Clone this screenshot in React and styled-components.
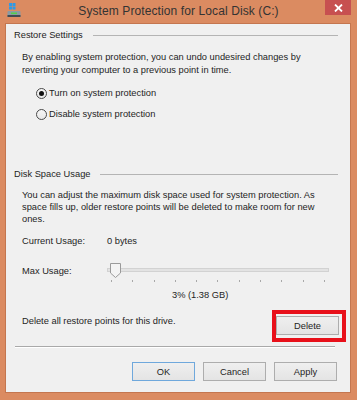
import React from 'react';
import styled, { createGlobalStyle } from 'styled-components';

const GlobalStyle = createGlobalStyle`
  html, body {
    margin: 0;
    padding: 0;
  }
  body {
    font-family: "Liberation Sans", Arial, sans-serif;
    font-size: 9.3px;
    color: #1e1e1e;
  }
`;

const Window = styled.div`
  width: 357px;
  height: 400px;
  background: #db8b61;
  display: flex;
  flex-direction: column;
  box-sizing: border-box;
`;

const TitleBar = styled.div`
  height: 23px;
  display: grid;
  grid-template-columns: 1fr auto 1fr;
  align-items: start;
`;

const AppIcon = styled.svg`
  margin: 3px 0 0 7px;
  width: 15px;
  height: 15px;
`;

const Title = styled.div`
  font-size: 12px;
  color: #333;
  line-height: 22px;
  letter-spacing: 0.1px;
`;

const CloseButton = styled.div`
  justify-self: end;
  margin-right: 6px;
  width: 26px;
  height: 15px;
  background: #c75050;
  display: flex;
  align-items: center;
  justify-content: center;
`;

const Panel = styled.div`
  margin: 0 6px 0 5px;
  height: 370px;
  box-sizing: border-box;
  background: #f0f0f0;
  border: 1px solid #c4764f;
  padding: 5px 12px 0 8px;
  display: flex;
  flex-direction: column;
`;

const GroupHeader = styled.div`
  display: flex;
  align-items: center;
  line-height: 12px;
  margin-top: ${(p) => p.$top || 0}px;
  &::after {
    content: '';
    flex: 1;
    height: 1px;
    margin-left: 10px;
    background: #b4b4b4;
  }
`;

const Para = styled.p`
  margin: ${(p) => p.$top || 0}px 0 0 8px;
  line-height: ${(p) => p.$lh || 12}px;
  width: 300px;
`;

const RadioRow = styled.label`
  display: flex;
  align-items: center;
  height: 14px;
  margin: ${(p) => p.$top || 0}px 0 0 22px;
  gap: 2px;
`;

const RadioCircle = styled.span`
  width: 9px;
  height: 9px;
  border-radius: 50%;
  border: 1px solid #4a4a4a;
  background: linear-gradient(#f6f6f6, #e8e8e8);
  display: flex;
  align-items: center;
  justify-content: center;
  &::after {
    content: '';
    width: 5px;
    height: 5px;
    border-radius: 50%;
    background: ${(p) => (p.$checked ? '#111' : 'transparent')};
  }
`;

const InfoRow = styled.div`
  display: flex;
  align-items: flex-start;
  margin: ${(p) => p.$top || 0}px 0 0 8px;
  line-height: 12px;
`;

const RowLabel = styled.span`
  width: 85px;
  flex-shrink: 0;
  padding-top: ${(p) => p.$pad || 0}px;
`;

const Slider = styled.div`
  position: relative;
  width: 222px;
  height: 22px;
`;

const Track = styled.div`
  position: absolute;
  left: 0;
  right: 0;
  top: 5px;
  height: 2px;
  background: #e3e3e3;
  border: 1px solid #d2d2d2;
`;

const Thumb = styled.svg`
  position: absolute;
  left: 3px;
  top: 0;
  width: 11px;
  height: 15px;
`;

const Ticks = styled.div`
  position: absolute;
  left: 4px;
  right: 4px;
  top: 17px;
  display: flex;
  justify-content: space-between;
  span {
    width: 1px;
    height: 2px;
    background: #a8a8a8;
  }
`;

const Percent = styled.div`
  margin: 4px 0 0 158px;
  line-height: 12px;
`;

const DeleteRow = styled.div`
  display: flex;
  justify-content: space-between;
  align-items: flex-start;
  margin: 14px 0 0 8px;
  line-height: 12px;
`;

const Highlight = styled.div`
  position: relative;
  margin: 1px -1px 0 0;
  &::before {
    content: '';
    position: absolute;
    left: -4px;
    right: -7px;
    top: -6px;
    bottom: -7px;
    border: 4px solid #e8101a;
    box-sizing: border-box;
  }
`;

const Button = styled.button`
  width: ${(p) => p.$w || 63}px;
  height: 19px;
  padding: 0;
  font-family: inherit;
  font-size: 9.3px;
  color: #1e1e1e;
  background: linear-gradient(#efefef, #e4e4e4);
  border: 1px solid ${(p) => (p.$default ? '#6fa8dc' : '#adadad')};
  box-sizing: border-box;
`;

const Separator = styled.div`
  margin: 11px 3px 0 1px;
  height: 1px;
  background: #a9a9a9;
  border-bottom: 1px solid #fff;
`;

const Footer = styled.div`
  display: flex;
  justify-content: flex-end;
  gap: 8px;
  margin: 14px 1px 0 0;
`;

const ticks = Array.from({ length: 11 });

export default function App() {
  return (
    <>
      <GlobalStyle />
      <Window>
        <TitleBar>
          <AppIcon viewBox="0 0 15 15">
            <rect x="2" y="0" width="3" height="3" fill="#2f9ae8" />
            <rect x="5.5" y="0" width="3" height="3" fill="#2f9ae8" />
            <rect x="2" y="3.5" width="3" height="3" fill="#2f9ae8" />
            <rect x="5.5" y="3.5" width="3" height="3" fill="#2f9ae8" />
            <rect x="0.5" y="8" width="13" height="6" rx="1" fill="#8a9aa4" />
            <rect x="0.5" y="12" width="13" height="2" fill="#3f4a52" />
            <rect x="4" y="9.5" width="6" height="1.6" fill="#52d04a" />
          </AppIcon>
          <Title>System Protection for Local Disk (C:)</Title>
          <CloseButton>
            <svg width="9" height="8" viewBox="0 0 9 8">
              <path d="M1 0.5 L8 7.5 M8 0.5 L1 7.5" stroke="#fff" strokeWidth="1.8" />
            </svg>
          </CloseButton>
        </TitleBar>
        <Panel>
          <GroupHeader>Restore Settings</GroupHeader>
          <Para $top={10} $lh={13}>
            By enabling system protection, you can undo undesired changes by
            reverting your computer to a previous point in time.
          </Para>
          <RadioRow $top={9}>
            <RadioCircle $checked />
            Turn on system protection
          </RadioRow>
          <RadioRow $top={7}>
            <RadioCircle />
            Disable system protection
          </RadioRow>

          <GroupHeader $top={47}>Disk Space Usage</GroupHeader>
          <Para $top={9} $lh={12}>
            You can adjust the maximum disk space used for system protection. As
            space fills up, older restore points will be deleted to make room for new
            ones.
          </Para>
          <InfoRow $top={10}>
            <RowLabel>Current Usage:</RowLabel>
            <span>0 bytes</span>
          </InfoRow>
          <InfoRow $top={16}>
            <RowLabel $pad={2}>Max Usage:</RowLabel>
            <Slider>
              <Track />
              <Thumb viewBox="0 0 11 15">
                <path
                  d="M0.5 0.5 H10.5 V10 L5.5 14.5 L0.5 10 Z"
                  fill="#f3f3f3"
                  stroke="#9a9a9a"
                />
              </Thumb>
              <Ticks>
                {ticks.map((_, i) => (
                  <span key={i} />
                ))}
              </Ticks>
            </Slider>
          </InfoRow>
          <Percent>3% (1.38 GB)</Percent>
          <DeleteRow>
            <span>Delete all restore points for this drive.</span>
            <Highlight>
              <Button>Delete</Button>
            </Highlight>
          </DeleteRow>
          <Separator />
          <Footer>
            <Button $default>OK</Button>
            <Button>Cancel</Button>
            <Button>Apply</Button>
          </Footer>
        </Panel>
      </Window>
    </>
  );
}
